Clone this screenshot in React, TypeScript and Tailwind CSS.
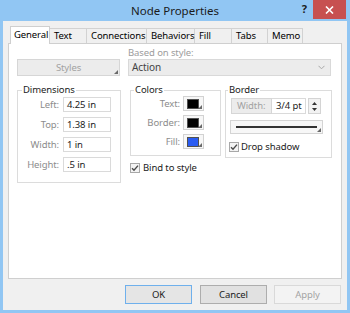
import React from "react";

function Check() {
  return (
    <div className="w-[10px] h-[10px] border border-[#a8a8a8] bg-[#f4f4f4] flex items-center justify-center shrink-0">
      <svg width="8" height="8" viewBox="0 0 8 8">
        <path d="M1 4.2 L3 6.2 L7 1.6" fill="none" stroke="#4a4a4a" strokeWidth="1.4" />
      </svg>
    </div>
  );
}

function Corner() {
  return (
    <svg width="4" height="4" viewBox="0 0 4 4" className="absolute right-[1px] bottom-[1px]">
      <path d="M4 0 L4 4 L0 4 Z" fill="#6a6a6a" />
    </svg>
  );
}

function Swatch({ color }: { color: string }) {
  return (
    <div className="relative w-[21px] h-[15px] border border-[#d2d2d2] bg-[#f7f7f7] flex items-center pl-[3px]">
      <div className="w-[12px] h-[10px] border border-[#505050]" style={{ backgroundColor: color }} />
      <Corner />
    </div>
  );
}

function DimRow({ label, value }: { label: string; value: string }) {
  return (
    <div className="flex items-center h-[15px]">
      <div className="w-[41px] text-right text-[#8c8c8c] leading-[15px]">{label}</div>
      <div className="ml-[4px] w-[48px] h-[15px] border border-[#dadada] bg-white pl-[3px] leading-[13px] text-[#1b1b1b]">{value}</div>
    </div>
  );
}

function ColorRow({ label, color }: { label: string; color: string }) {
  return (
    <div className="flex items-center h-[15px]">
      <div className="w-[49px] text-right text-[#8c8c8c] leading-[15px]">{label}</div>
      <div className="ml-[3px]">
        <Swatch color={color} />
      </div>
    </div>
  );
}

export default function App() {
  const tabs = [
    { t: "Text", w: "w-[37px]" },
    { t: "Connections", w: "w-[60px]" },
    { t: "Behaviors", w: "w-[48px]" },
    { t: "Fill", w: "w-[37px]" },
    { t: "Tabs", w: "w-[36px]" },
    { t: "Memo", w: "w-[35px]" },
  ];
  return (
    <div className="w-[350px] h-[313px] bg-[#91c6f3] flex flex-col font-['Noto_Sans',sans-serif] text-[9.5px] tracking-[-0.1px] text-black overflow-hidden">
      {/* Title bar */}
      <div className="h-[21px] grid grid-cols-[1fr_auto_1fr] items-start shrink-0">
        <div />
        <div className="text-[11.5px] tracking-normal leading-[22px] text-[#1b1b1b]">Node Properties</div>
        <div className="flex justify-end items-start pr-[4px]">
          <span className="mt-[2px] mr-[6px] font-bold text-[11px] leading-[14px] text-[#1b1b1b]">?</span>
          <div className="w-[33px] h-[19px] bg-[#c75050] flex items-center justify-center">
            <svg width="9" height="8" viewBox="0 0 9 8">
              <path d="M1 0.5 L8 7.5 M8 0.5 L1 7.5" stroke="#ffffff" strokeWidth="1.6" />
            </svg>
          </div>
        </div>
      </div>

      {/* Body */}
      <div className="mx-[3px] mb-[3px] flex-1 bg-[#f0f0f0] flex flex-col pt-[5px]">
        {/* Tabs */}
        <div className="flex items-end pl-[7px] h-[17px] relative z-10">
          <div className="w-[40px] h-[18px] -mb-[1px] bg-white border border-[#cfcfcf] border-b-0 pl-[3px] leading-[16px]">
            General
          </div>
          {tabs.map((x) => (
            <div
              key={x.t}
              className={`${x.w} h-[15px] bg-[#f0f0f0] border-t border-r border-[#d2d2d2] pl-[4px] leading-[14px] whitespace-nowrap`}
            >
              {x.t}
            </div>
          ))}
        </div>

        {/* Panel */}
        <div className="ml-[5px] w-[334px] h-[236px] bg-white border border-[#cfcfcf] flex flex-col pl-[8px] pt-[3px]">
          <div className="ml-[111px] leading-[12px] text-[#9c9c9c]">Based on style:</div>
          <div className="flex gap-[8px] h-[17px]">
            <div className="relative w-[103px] h-[17px] bg-[#ececec] border border-[#d6d6d6] text-center text-[#a2a2a2] leading-[15px]">
              Styles
              <Corner />
            </div>
            <div className="w-[203px] h-[17px] bg-[#ececec] border border-[#d9d9d9] flex items-center justify-between pl-[3px] pr-[5px] text-[#444] leading-[15px]">
              <span className="text-[10px]">Action</span>
              <svg width="7" height="5" viewBox="0 0 7 5">
                <path d="M0.5 0.8 L3.5 3.8 L6.5 0.8" fill="none" stroke="#a8a8a8" strokeWidth="1" />
              </svg>
            </div>
          </div>

          <div className="flex mt-[8px] items-start">
            {/* Dimensions */}
            <fieldset className="w-[104px] h-[99px] border border-[#dcdcdc]">
              <legend className="ml-[4px] px-[1px] leading-[12px] text-[#1b1b1b]">Dimensions</legend>
              <div className="mt-[1px] flex flex-col gap-[5px]">
                <DimRow label="Left:" value="4.25 in" />
                <DimRow label="Top:" value="1.38 in" />
                <DimRow label="Width:" value="1 in" />
                <DimRow label="Height:" value=".5 in" />
              </div>
            </fieldset>

            {/* Colors */}
            <div className="ml-[9px] flex flex-col">
              <fieldset className="w-[91px] h-[72px] border border-[#dcdcdc]">
                <legend className="ml-[3px] px-[1px] leading-[12px] text-[#1b1b1b]">Colors</legend>
                <div className="flex flex-col gap-[4px]">
                  <ColorRow label="Text:" color="#000000" />
                  <ColorRow label="Border:" color="#000000" />
                  <ColorRow label="Fill:" color="#2a5cf2" />
                </div>
              </fieldset>
              <div className="mt-[7px] flex items-center gap-[3px] h-[10px]">
                <Check />
                <span className="leading-[12px] text-[#1b1b1b]">Bind to style</span>
              </div>
            </div>

            {/* Border */}
            <fieldset className="ml-[4px] w-[107px] h-[74px] border border-[#dcdcdc]">
              <legend className="ml-[2px] px-[1px] leading-[12px] text-[#1b1b1b]">Border</legend>
              <div className="mt-[2px] ml-[5px] flex items-center h-[16px]">
                <div className="w-[41px] h-[16px] bg-[#ececec] border border-[#d6d6d6] pl-[5px] text-[#a2a2a2] leading-[14px]">
                  Width:
                </div>
                <div className="w-[34px] h-[16px] bg-white border border-[#dadada] border-l-0 pl-[4px] leading-[14px] text-[#1b1b1b] whitespace-nowrap">
                  3/4 pt
                </div>
                <div className="ml-[2px] w-[13px] h-[16px] border border-[#d4d4d4] bg-[#f2f2f2] flex flex-col items-center justify-center gap-[3px]">
                  <svg width="5" height="3" viewBox="0 0 5 3">
                    <path d="M0 3 L2.5 0 L5 3 Z" fill="#333" />
                  </svg>
                  <svg width="5" height="3" viewBox="0 0 5 3">
                    <path d="M0 0 L2.5 3 L5 0 Z" fill="#333" />
                  </svg>
                </div>
              </div>
              <div className="relative mt-[6px] ml-[4px] w-[93px] h-[14px] border border-[#d4d4d4] bg-[#f7f7f7] flex items-center px-[5px]">
                <div className="w-full h-[2px] bg-[#333]" />
                <Corner />
              </div>
              <div className="mt-[8px] ml-[3px] flex items-center gap-[2px] h-[10px]">
                <Check />
                <span className="leading-[12px] text-[#1b1b1b]">Drop shadow</span>
              </div>
            </fieldset>
          </div>
        </div>

        {/* Buttons */}
        <div className="mt-[6px] flex justify-end pr-[6px] h-[19px]">
          <div className="w-[67px] h-[19px] bg-[#e5e5e5] border border-[#6fb0ec] text-center leading-[17px] text-[#1b1b1b]">OK</div>
          <div className="ml-[8px] w-[67px] h-[19px] bg-[#e1e1e1] border border-[#adadad] text-center leading-[17px] text-[#1b1b1b]">Cancel</div>
          <div className="ml-[7px] w-[67px] h-[19px] bg-[#f3f3f3] border border-[#d9d9d9] text-center leading-[17px] text-[#a3a3a3]">Apply</div>
        </div>
      </div>
    </div>
  );
}
